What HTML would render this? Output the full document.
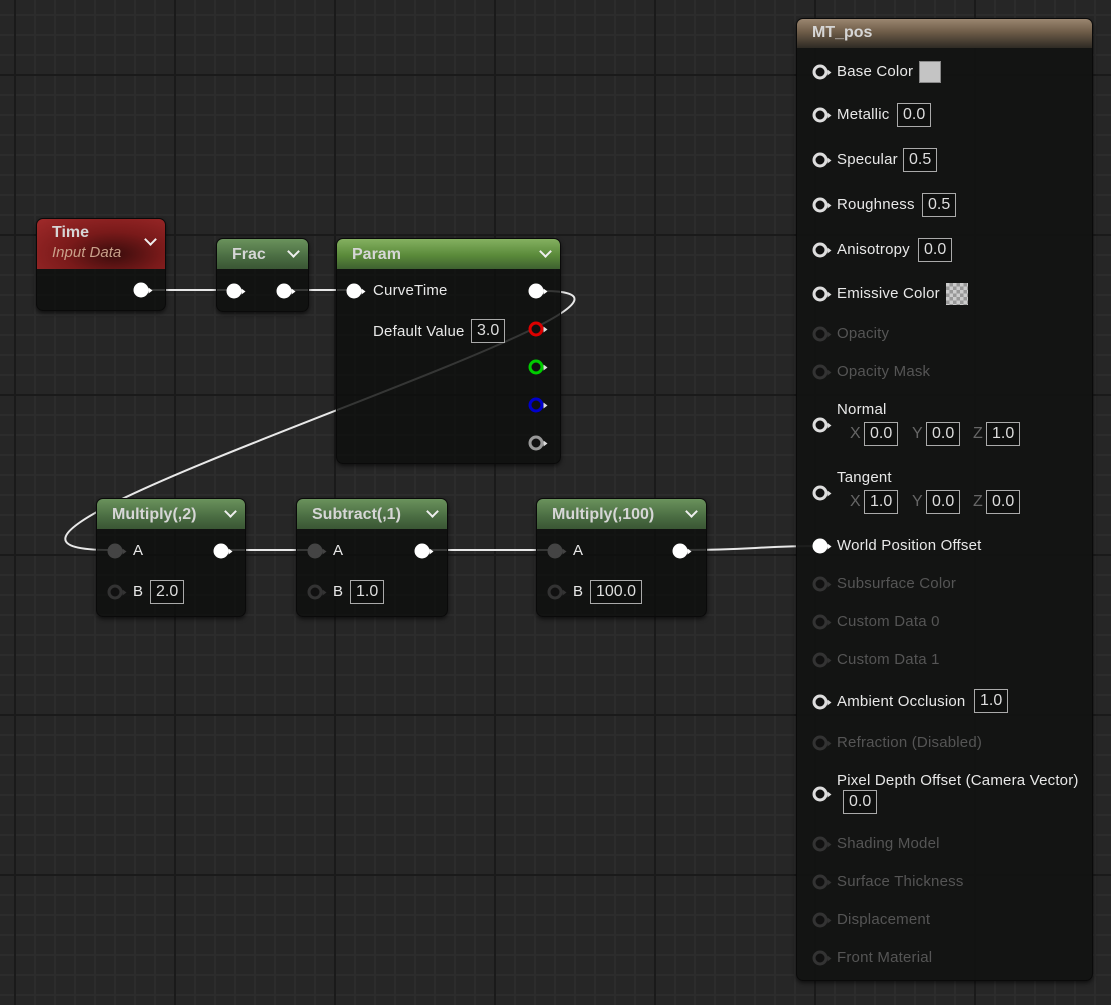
<!DOCTYPE html>
<html><head><meta charset="utf-8"><style>
*{margin:0;padding:0;box-sizing:border-box}
body{width:1111px;height:1005px;overflow:hidden;position:relative;font-family:"Liberation Sans",sans-serif;
background-color:#262626;
background-image:
linear-gradient(90deg,#1a1a1a 0 2px,transparent 2px),
linear-gradient(0deg,#1a1a1a 0 2px,transparent 2px),
linear-gradient(90deg,#2c2c2c 0 2px,transparent 2px),
linear-gradient(0deg,#2c2c2c 0 2px,transparent 2px);
background-size:160px 160px,160px 160px,20px 20px,20px 20px;
background-position:14px 0,0 76px,14px 0,0 16px;}
.n{position:absolute;background:rgba(14,15,14,0.82);border:1px solid #0a0a0a;border-radius:7px;box-shadow:0 2px 4px rgba(0,0,0,.6);overflow:hidden}
.h{height:30px;color:#d6d6d6;font-weight:bold;font-size:16px;padding:7px 0 0 15px;position:relative}
.g{background:linear-gradient(180deg,#6a925c 0%,#4a6c42 60%,#3a5634 100%)}
.chev{position:absolute;right:10px;top:8px;width:9px;height:9px;border-right:2.5px solid #eee;border-bottom:2.5px solid #eee;transform:rotate(45deg)}
.t{position:absolute;color:#e8e8e8;font-size:15px;white-space:nowrap;line-height:18px;letter-spacing:0.2px}
.d{color:#555}
.b{position:absolute;border:1px solid #aaa;color:#ddd;font-size:16px;line-height:22px;padding:0 5px;height:24px;background:#0e0f0e}
.p{position:absolute;width:15px;height:15px;border-radius:50%;border:3px solid #ddd;transform:translate(-50%,-50%);background:#111}
.p::after{content:"";position:absolute;right:-7px;top:1.5px;border-left:4px solid #ddd;border-top:3px solid transparent;border-bottom:3px solid transparent}
.f{background:#fff;border-color:#fff}
.f::after{border-left-color:#fff}
.x{border-color:#333;background:#111}.x::after{border-left-color:#333}
.gr{background:#444;border-color:#444}.gr::after{border-left-color:#444}
.ax{position:absolute;color:#666;font-size:16px}
</style></head><body>
<svg width="1111" height="1005" style="position:absolute;left:0;top:0">
<g fill="none" stroke="#e8e8e8" stroke-width="2">
<path d="M148 290 L232 290"/>
<path d="M290 290 L352 290"/>
<path d="M543 291 C 750 291, -140 550, 110 550"/>
<path d="M226 550 L312 550"/>
<path d="M428 550 L552 550"/>
<path d="M686 550 C 750 550, 760 546, 820 546"/>
</g></svg>

<!-- Time -->
<div class="n" style="left:36px;top:218px;width:130px;height:93px">
<div class="h" style="height:50px;background:radial-gradient(ellipse at 60% 70%,#3a0c0c 0%,#7a1a1a 45%,#a02a2a 100%);padding-top:5px">Time<div style="font-weight:normal;font-style:italic;font-size:15px;color:#c9a08a;margin-top:2px">Input Data</div><div class="chev" style="top:16px"></div></div>
</div>
<span class="p f" style="left:141px;top:290px"></span>

<!-- Frac -->
<div class="n" style="left:216px;top:238px;width:93px;height:74px"><div class="h g">Frac<div class="chev"></div></div></div>
<span class="p f" style="left:234px;top:291px"></span>
<span class="p f" style="left:284px;top:291px"></span>

<!-- Param -->
<div class="n" style="left:336px;top:238px;width:225px;height:226px"><div class="h" style="background:linear-gradient(180deg,#84b060 0%,#5a8a3a 55%,#3e6030 100%)">Param<div class="chev"></div></div></div>
<span class="p f" style="left:354px;top:291px"></span>
<div class="t" style="left:373px;top:282px">CurveTime</div>
<span class="p f" style="left:536px;top:291px"></span>
<div class="t" style="left:373px;top:323px">Default Value</div>
<div class="b" style="left:471px;top:319px">3.0</div>
<span class="p" style="left:536px;top:329px;border-color:#d00"></span>
<span class="p" style="left:536px;top:367px;border-color:#0c0"></span>
<span class="p" style="left:536px;top:405px;border-color:#00c"></span>
<span class="p" style="left:536px;top:443px;border-color:#999"></span>

<!-- Multiply 2 -->
<div class="n" style="left:96px;top:498px;width:150px;height:119px"><div class="h g">Multiply(,2)<div class="chev"></div></div></div>
<span class="p gr" style="left:115px;top:551px"></span><div class="t" style="left:133px;top:542px">A</div>
<span class="p f" style="left:221px;top:551px"></span>
<span class="p x" style="left:115px;top:592px"></span><div class="t" style="left:133px;top:583px">B</div>
<div class="b" style="left:150px;top:580px">2.0</div>

<!-- Subtract -->
<div class="n" style="left:296px;top:498px;width:152px;height:119px"><div class="h g">Subtract(,1)<div class="chev"></div></div></div>
<span class="p gr" style="left:315px;top:551px"></span><div class="t" style="left:333px;top:542px">A</div>
<span class="p f" style="left:422px;top:551px"></span>
<span class="p x" style="left:315px;top:592px"></span><div class="t" style="left:333px;top:583px">B</div>
<div class="b" style="left:350px;top:580px">1.0</div>

<!-- Multiply 100 -->
<div class="n" style="left:536px;top:498px;width:171px;height:119px"><div class="h g">Multiply(,100)<div class="chev"></div></div></div>
<span class="p gr" style="left:555px;top:551px"></span><div class="t" style="left:573px;top:542px">A</div>
<span class="p f" style="left:680px;top:551px"></span>
<span class="p x" style="left:555px;top:592px"></span><div class="t" style="left:573px;top:583px">B</div>
<div class="b" style="left:590px;top:580px">100.0</div>

<!-- MT_pos -->
<div class="n" style="left:796px;top:18px;width:297px;height:963px;background:rgba(18,19,18,0.95)"><div class="h" style="height:29px;padding-top:5px;background:linear-gradient(180deg,#9a8670 0%,#6e5c48 45%,#2e2a24 100%)">MT_pos</div></div>

<span class="p" style="left:820px;top:72px"></span><div class="t" style="left:837px;top:63px">Base Color</div>
<div style="position:absolute;left:919px;top:61px;width:22px;height:22px;background:#c4c4c4;border:1px solid #888"></div>
<span class="p" style="left:820px;top:115px"></span><div class="t" style="left:837px;top:106px">Metallic</div><div class="b" style="left:897px;top:103px">0.0</div>
<span class="p" style="left:820px;top:160px"></span><div class="t" style="left:837px;top:151px">Specular</div><div class="b" style="left:903px;top:148px">0.5</div>
<span class="p" style="left:820px;top:205px"></span><div class="t" style="left:837px;top:196px">Roughness</div><div class="b" style="left:922px;top:193px">0.5</div>
<span class="p" style="left:820px;top:250px"></span><div class="t" style="left:837px;top:241px">Anisotropy</div><div class="b" style="left:918px;top:238px">0.0</div>
<span class="p" style="left:820px;top:294px"></span><div class="t" style="left:837px;top:285px">Emissive Color</div>
<div style="position:absolute;left:946px;top:283px;width:22px;height:22px;background:repeating-conic-gradient(#999 0 25%,#ccc 0 50%) 0 0/7px 7px"></div>
<span class="p x" style="left:820px;top:334px"></span><div class="t d" style="left:837px;top:325px">Opacity</div>
<span class="p x" style="left:820px;top:372px"></span><div class="t d" style="left:837px;top:363px">Opacity Mask</div>
<span class="p" style="left:820px;top:425px"></span><div class="t" style="left:837px;top:401px">Normal</div>
<span class="ax" style="left:850px;top:425px">X</span><div class="b" style="left:864px;top:422px">0.0</div>
<span class="ax" style="left:912px;top:425px">Y</span><div class="b" style="left:926px;top:422px">0.0</div>
<span class="ax" style="left:973px;top:425px">Z</span><div class="b" style="left:986px;top:422px">1.0</div>
<span class="p" style="left:820px;top:493px"></span><div class="t" style="left:837px;top:469px">Tangent</div>
<span class="ax" style="left:850px;top:493px">X</span><div class="b" style="left:864px;top:490px">1.0</div>
<span class="ax" style="left:912px;top:493px">Y</span><div class="b" style="left:926px;top:490px">0.0</div>
<span class="ax" style="left:973px;top:493px">Z</span><div class="b" style="left:986px;top:490px">0.0</div>
<span class="p f" style="left:820px;top:546px"></span><div class="t" style="left:837px;top:537px">World Position Offset</div>
<span class="p x" style="left:820px;top:584px"></span><div class="t d" style="left:837px;top:575px">Subsurface Color</div>
<span class="p x" style="left:820px;top:622px"></span><div class="t d" style="left:837px;top:613px">Custom Data 0</div>
<span class="p x" style="left:820px;top:660px"></span><div class="t d" style="left:837px;top:651px">Custom Data 1</div>
<span class="p" style="left:820px;top:702px"></span><div class="t" style="left:837px;top:693px">Ambient Occlusion</div><div class="b" style="left:974px;top:689px">1.0</div>
<span class="p x" style="left:820px;top:743px"></span><div class="t d" style="left:837px;top:734px">Refraction (Disabled)</div>
<span class="p" style="left:820px;top:794px"></span><div class="t" style="left:837px;top:772px">Pixel Depth Offset (Camera Vector)</div><div class="b" style="left:843px;top:790px">0.0</div>
<span class="p x" style="left:820px;top:844px"></span><div class="t d" style="left:837px;top:835px">Shading Model</div>
<span class="p x" style="left:820px;top:882px"></span><div class="t d" style="left:837px;top:873px">Surface Thickness</div>
<span class="p x" style="left:820px;top:920px"></span><div class="t d" style="left:837px;top:911px">Displacement</div>
<span class="p x" style="left:820px;top:958px"></span><div class="t d" style="left:837px;top:949px">Front Material</div>
</body></html>
